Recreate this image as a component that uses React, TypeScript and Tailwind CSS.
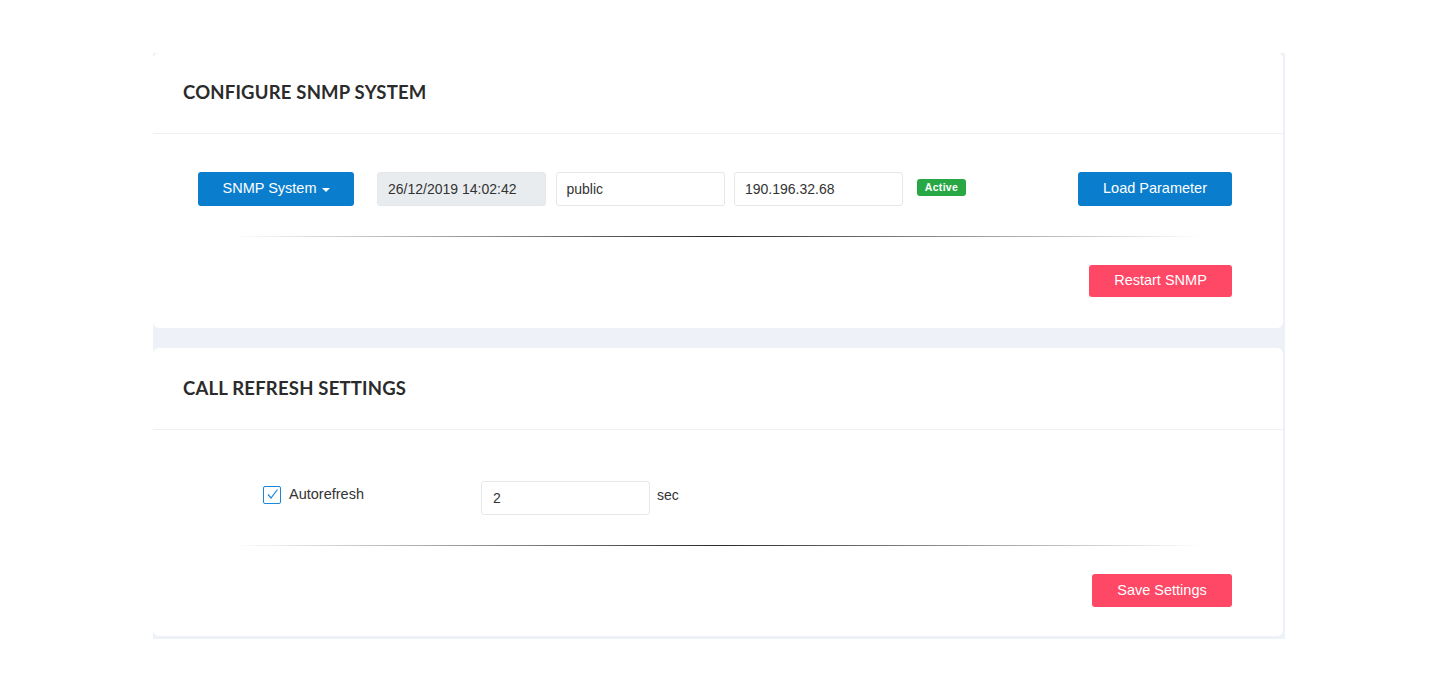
import React from "react";

const sans = "font-['Liberation_Sans',Arial,sans-serif]";
const title = "font-['Lato','Liberation_Sans',sans-serif] text-[18.5px] font-bold text-[#2b2b2b] tracking-[0.2px]";

function Field({ value, disabled }: { value: string; disabled?: boolean }) {
  return (
    <input
      readOnly
      value={value}
      className={`${sans} h-[34px] w-[169px] rounded-[3px] border border-[#e4e7ec] px-[10px] text-[14px] text-[#333] outline-none ${
        disabled ? "bg-[#e9ecef]" : "bg-white"
      }`}
    />
  );
}

function Divider() {
  return <div className="h-px bg-[linear-gradient(to_right,transparent,#2a2a2a_50%,transparent)]" />;
}

export default function App() {
  return (
    <div className={`min-h-[691px] bg-white pt-[53px] ${sans}`}>
      <div className="ml-[153px] w-[1132px] bg-[#eef2f8] pb-[3px] pr-[2px]">
        {/* snmp card */}
        <section className="h-[275px] rounded-md bg-white">
          <div className="flex h-[81px] items-center border-b border-[#eef0f5] px-[30px]">
            <h2 className={title}>CONFIGURE SNMP SYSTEM</h2>
          </div>
          <div className="px-[51px] pl-[45px] pt-[38px]">
            <div className="flex items-center">
              <button className="flex h-[34px] w-[156px] items-center justify-center gap-[5px] rounded-[3px] bg-[#0a7dcd] text-[14.5px] text-white">
                SNMP System
                <span className="mt-[1px] border-x-[4px] border-t-[4px] border-x-transparent border-t-white" />
              </button>
              <div className="ml-[23px] flex gap-[9.5px]">
                <Field value="26/12/2019 14:02:42" disabled />
                <Field value="public" />
                <Field value="190.196.32.68" />
              </div>
              <span className="ml-[14px] -mt-[3px] flex h-[17px] w-[49px] items-center justify-center rounded-[3px] bg-[#28a745] text-[10.5px] font-bold tracking-[0.3px] text-white">
                Active
              </span>
              <button className="ml-auto h-[34px] w-[154px] rounded-[3px] bg-[#0a7dcd] text-[14.5px] text-white">
                Load Parameter
              </button>
            </div>
            <div className="mt-[30px] ml-[35px] mr-[30px]">
              <Divider />
            </div>
            <div className="mt-[28px] flex justify-end">
              <button className="h-[32px] w-[143px] rounded-[3px] bg-[#ff4766] text-[14.5px] text-white">
                Restart SNMP
              </button>
            </div>
          </div>
        </section>

        {/* refresh card */}
        <section className="mt-[20px] h-[288px] rounded-md bg-white">
          <div className="flex h-[82px] items-center border-b border-[#eef0f5] px-[30px]">
            <h2 className={title}>CALL REFRESH SETTINGS</h2>
          </div>
          <div className="px-[51px] pl-[45px] pt-[51px]">
            <div className="flex items-start">
              <label className="ml-[65px] mt-[3px] flex w-[218px] items-center gap-[8px] text-[14.5px] text-[#333]">
                <span className="flex h-[18px] w-[18px] items-center justify-center rounded-[2px] border border-[#1c86d8] bg-white">
                  <svg width="13" height="13" viewBox="0 0 13 13" fill="none">
                    <path d="M2 6.5 L5 10 L11.5 1.5" stroke="#1c86d8" strokeWidth="1.2" />
                  </svg>
                </span>
                Autorefresh
              </label>
              <input
                readOnly
                value="2"
                className={`${sans} h-[34px] w-[169px] rounded-[3px] border border-[#e4e7ec] bg-white px-[11px] text-[14px] text-[#333] outline-none`}
              />
              <span className="ml-[7px] mt-[4px] text-[14px] text-[#333]">sec</span>
            </div>
            <div className="mt-[30px] ml-[35px] mr-[30px]">
              <Divider />
            </div>
            <div className="mt-[28px] flex justify-end">
              <button className="h-[33px] w-[140px] rounded-[3px] bg-[#ff4766] text-[14.5px] text-white">
                Save Settings
              </button>
            </div>
          </div>
        </section>
      </div>
    </div>
  );
}
